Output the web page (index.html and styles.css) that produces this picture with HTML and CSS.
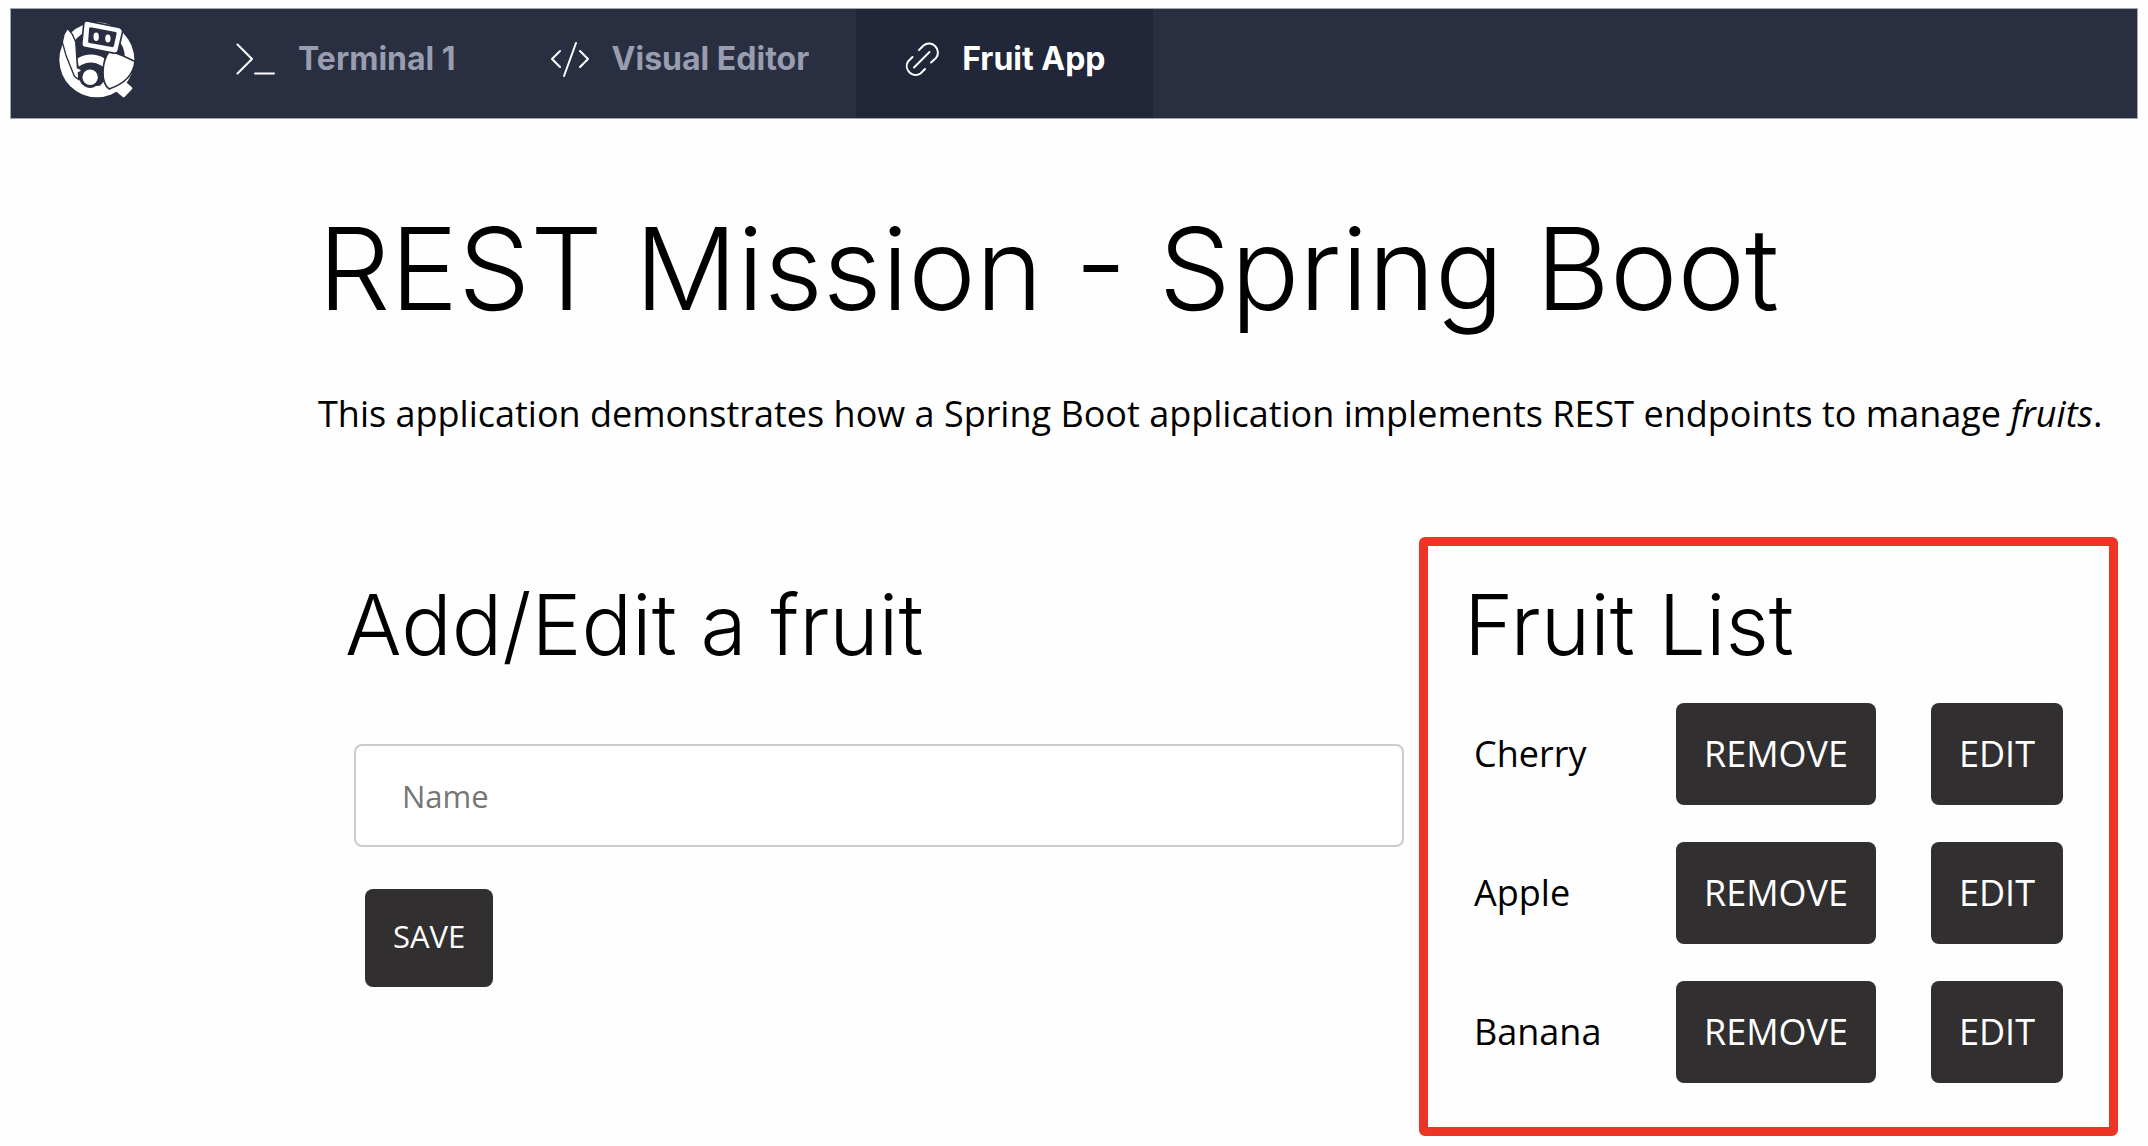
FILE: index.html
```html
<!DOCTYPE html>
<html lang="en">
<head>
<meta charset="utf-8">
<meta name="viewport" content="width=device-width, initial-scale=1">
<title>REST Mission - Spring Boot</title>
<link rel="stylesheet" href="styles.css">
</head>
<body>
<nav class="topbar" aria-label="Workspace tabs">
  <a class="logo" href="#" aria-label="Home">
    <svg viewBox="176 65 233 233" width="78" height="78" aria-hidden="true">
      <circle cx="292" cy="181" r="112" fill="#fff"/>
      <path fill="#fff" stroke="#fff" stroke-width="8" stroke-linejoin="round" d="M350 270L372 289L394 266L376 250Z"/>
      <circle cx="292" cy="175" r="84" fill="#292e41"/>
      <path fill="#fff" d="M234 177C258 161 290 161 314 176L311 202C285 184 262 186 238 201Z"/>
      <circle cx="272" cy="233" r="32" fill="#292e41"/>
      <path fill="#fff" d="M303 256L314 245L320 262L306 260Z"/>
      <circle cx="272" cy="233" r="23" fill="#fff"/>
      <path fill="#fff" stroke="#292e41" stroke-width="4" d="M204 87L219 105L229 128L234 205L246 210L244 217L237 219L238 240L225 230L200 168L189 128L194 105Z"/>
      <path fill="#fff" stroke="#292e41" stroke-width="5" d="M330 154L370 169L406 186C402 222 375 252 329 268C304 250 304 190 330 154Z"/>
      <path fill="#fff" stroke="#292e41" stroke-width="5" d="M262 65L359 84Q370 87 369 97L356 153Q353 163 342 161L254 144Q246 141 247 132L253 73Q255 64 262 65Z"/>
      <path fill="#292e41" d="M273 84L348 98Q352 99 351 103L343 140Q341 144 337 143L270 131Q266 130 266 126L269 87Q270 84 273 84Z"/>
      <ellipse cx="290" cy="112" rx="8" ry="13" fill="#fff"/>
      <ellipse cx="325" cy="117" rx="8" ry="12" fill="#fff"/>
    </svg>
  </a>
  <a class="tab" href="#terminal">
    <svg class="tab-icon" viewBox="0 0 40 36" width="40" height="36" aria-hidden="true"><path d="M1.500 3.500L16 18L1.500 32.500M19 32.500H38"/></svg>
    <span>Terminal 1</span>
  </a>
  <a class="tab" href="#editor">
    <svg class="tab-icon" viewBox="0 0 40 36" width="40" height="36" aria-hidden="true"><path d="M10 10L2 18L10 26M30 10L38 18L30 26M26 2L14 35"/></svg>
    <span>Visual Editor</span>
  </a>
  <a class="tab tab-active" href="#app" aria-current="page">
    <svg class="tab-icon" viewBox="0 0 37 36" width="37" height="36" aria-hidden="true"><path d="M16 9L20.500 4.500A8.900 8.900 0 0 1 33 17L28 21.500M9.500 16L5 20.500A8.900 8.900 0 0 0 17.500 32.500L22 28M11 26.500L26.500 11"/></svg>
    <span>Fruit App</span>
  </a>
</nav>

<main class="page">
  <h1 class="title">REST Mission - Spring Boot</h1>
  <p class="intro">This application demonstrates how a Spring Boot application implements REST endpoints to manage <em>fruits</em>.</p>

  <div class="columns">
    <section class="editor">
      <h2 class="heading">Add/Edit a fruit</h2>
      <form class="form">
        <input class="field" type="text" name="name" placeholder="Name" aria-label="Name">
        <button class="btn btn-save" type="button">SAVE</button>
      </form>
    </section>

    <section class="list">
      <h2 class="heading">Fruit List</h2>
      <table class="fruits">
        <tbody>
          <tr><td class="name">Cherry</td><td><button class="btn" type="button">REMOVE</button></td><td><button class="btn" type="button">EDIT</button></td></tr>
          <tr><td class="name">Apple</td><td><button class="btn" type="button">REMOVE</button></td><td><button class="btn" type="button">EDIT</button></td></tr>
          <tr><td class="name">Banana</td><td><button class="btn" type="button">REMOVE</button></td><td><button class="btn" type="button">EDIT</button></td></tr>
        </tbody>
      </table>
    </section>
  </div>
</main>
</body>
</html>
```
FILE: styles.css
```css
* {
  box-sizing: border-box;
}

body {
  margin: 0;
  padding: 8px 10px;
  background: #fefefe;
  color: #000;
  font: 36px/48px "Open Sans", "Noto Sans", sans-serif;
}

.topbar {
  display: flex;
  height: 111px;
  border: 1px solid #a3a4ac;
  background: #292e41;
}

.logo {
  display: flex;
  align-items: center;
  padding: 0 53px 8px 47px;
}

.tab {
  display: flex;
  align-items: center;
  gap: 22px;
  padding: 0 47px 10px;
  color: #989daf;
  font: 700 32px/40px Inter, Roboto, sans-serif;
  text-decoration: none;
}

.tab-active {
  background: #212638;
  color: #fff;
}

.tab-icon {
  fill: none;
  stroke: #fff;
  stroke-width: 2;
  stroke-linecap: round;
  stroke-linejoin: round;
}

.page {
  padding: 78px 20px 0 308px;
}

.title,
.heading {
  margin: 0;
  font-family: Inter, "Open Sans", sans-serif;
  font-weight: 300;
}

.title {
  font-size: 114px;
  line-height: 144px;
}

.intro {
  margin: 49px 0 99px;
}

.columns {
  display: grid;
  grid-template-columns: minmax(0, 1fr) 699px;
  gap: 15px;
  align-items: start;
}

.heading {
  font-size: 84px;
  line-height: 100px;
}

.editor {
  padding: 38px 0 0 27px;
}

.form {
  display: flex;
  flex-direction: column;
  align-items: flex-start;
  padding: 69px 0 0 9px;
  gap: 42px;
}

.field {
  width: 100%;
  height: 103px;
  padding: 0 46px;
  border: 2px solid #ccc;
  border-radius: 8px;
  background: #fff;
  color: #000;
  font: 31px/40px "Open Sans", "Noto Sans", sans-serif;
}

.field::placeholder {
  color: #757575;
}

.btn {
  height: 102px;
  padding: 0 28px;
  border: 0;
  border-radius: 8px;
  background: #322f30;
  color: #fff;
  font: inherit;
}

.btn-save {
  height: 98px;
  margin-left: 11px;
  padding-bottom: 4px;
  font-size: 31px;
}

.list {
  padding: 29px 46px 44px 36px;
  border: 9px solid #ee3424;
  border-radius: 6px;
}

.fruits {
  width: 100%;
  margin-top: 28px;
  border-collapse: collapse;
}

.fruits td {
  padding: 0 0 37px;
}

.fruits tr:last-child td {
  padding-bottom: 0;
}

.fruits .name {
  width: 212px;
  padding-left: 10px;
}

.fruits td:last-child {
  text-align: right;
}
```
